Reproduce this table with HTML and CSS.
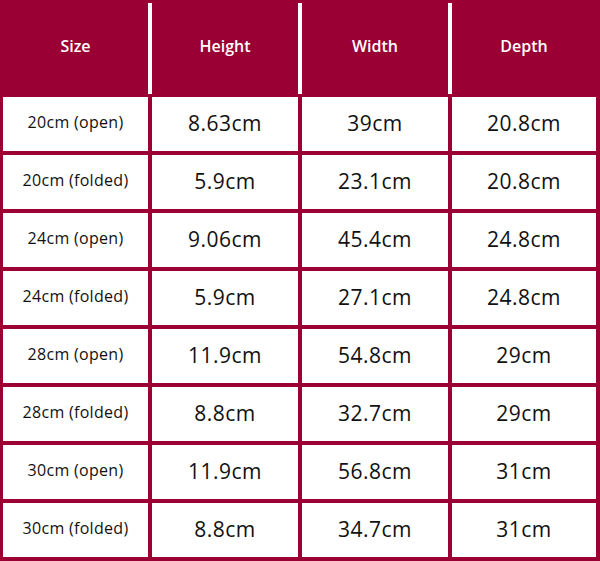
FILE: index.html
```html
<!DOCTYPE html>
<html>
<head>
<meta charset="utf-8">
<link rel="stylesheet" href="styles.css">
</head>
<body>
<div class="table">
  <div class="head">
    <div class="hcell">Size</div>
    <div class="hcell">Height</div>
    <div class="hcell">Width</div>
    <div class="hcell">Depth</div>
  </div>
  <div class="body">
    <div class="cell size">20cm (open)</div><div class="cell">8.63cm</div><div class="cell">39cm</div><div class="cell">20.8cm</div>
    <div class="cell size">20cm (folded)</div><div class="cell">5.9cm</div><div class="cell">23.1cm</div><div class="cell">20.8cm</div>
    <div class="cell size">24cm (open)</div><div class="cell">9.06cm</div><div class="cell">45.4cm</div><div class="cell">24.8cm</div>
    <div class="cell size">24cm (folded)</div><div class="cell">5.9cm</div><div class="cell">27.1cm</div><div class="cell">24.8cm</div>
    <div class="cell size">28cm (open)</div><div class="cell">11.9cm</div><div class="cell">54.8cm</div><div class="cell">29cm</div>
    <div class="cell size">28cm (folded)</div><div class="cell">8.8cm</div><div class="cell">32.7cm</div><div class="cell">29cm</div>
    <div class="cell size">30cm (open)</div><div class="cell">11.9cm</div><div class="cell">56.8cm</div><div class="cell">31cm</div>
    <div class="cell size">30cm (folded)</div><div class="cell">8.8cm</div><div class="cell">34.7cm</div><div class="cell">31cm</div>
  </div>
</div>
</body>
</html>
```
FILE: styles.css
```css
html, body {
  margin: 0;
  padding: 0;
  background: #9b0034;
  font-family: "Open Sans", "Liberation Sans", sans-serif;
}
.table {
  width: 600px;
  height: 561px;
  box-sizing: border-box;
  padding: 3px 4px 4px 3px;
}
.head, .body {
  display: grid;
  grid-template-columns: 145px 146px 146px 144px;
  column-gap: 4px;
}
.head {
  background: #ffffff;
  height: 91px;
}
.hcell {
  background: #9b0034;
  color: #ffffff;
  font-size: 16px;
  font-weight: 600;
  display: flex;
  align-items: center;
  justify-content: center;
  padding-bottom: 6px;
}
.body {
  margin-top: 3px;
  row-gap: 4px;
  grid-auto-rows: 54px;
}
.cell {
  background: #ffffff;
  color: #111111;
  font-size: 21px;
  letter-spacing: 0.5px;
  display: flex;
  align-items: center;
  justify-content: center;
  padding-bottom: 2px;
}
.cell.size {
  font-size: 16px;
  letter-spacing: 0.3px;
  padding-bottom: 4px;
}
```
